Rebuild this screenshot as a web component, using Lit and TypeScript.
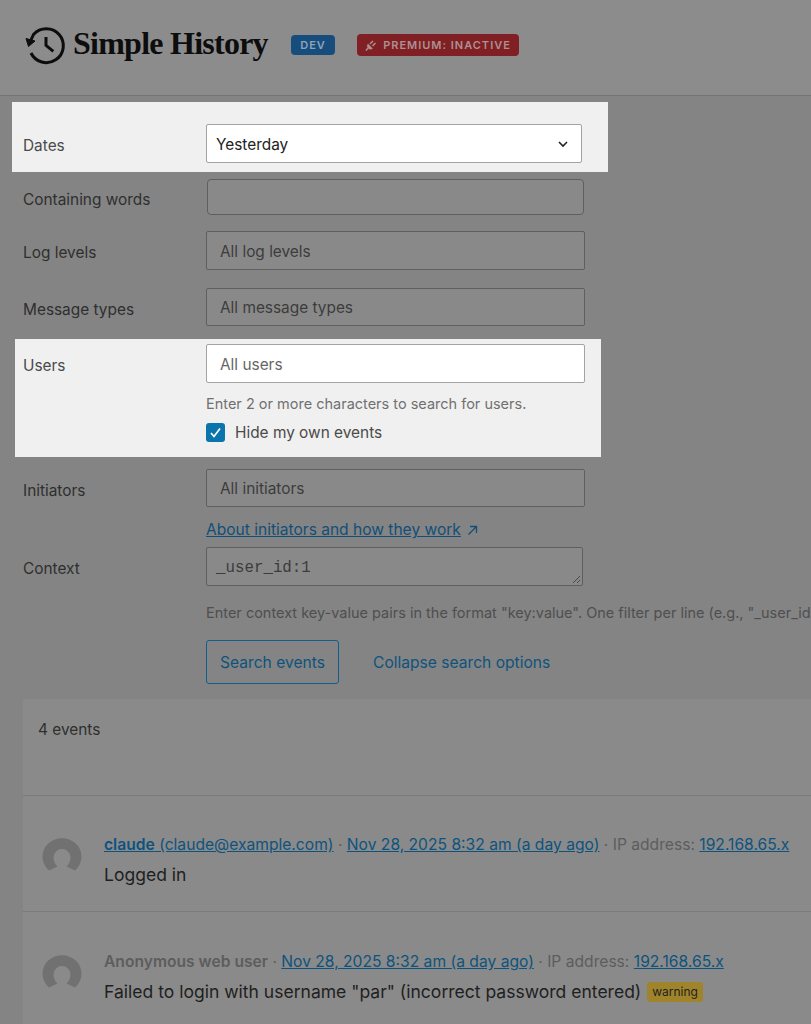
import { LitElement, html, css } from "lit";
import { customElement } from "lit/decorators.js";

// gravatar style placeholder
const avatar = html`<svg class="avatar" viewBox="0 0 40 36" aria-hidden="true">
  <path d="M7 35.5A19.5 18.5 0 1 1 33 35.5L24.5 31.5C27 29.5 28.5 26 28.5 22.5A8.5 8.5 0 0 0 11.5 22.5C11.5 26 13 29.5 15.5 31.5Z" transform="translate(0 -2)" />
</svg>`;

@customElement("app-root")
export class AppRoot extends LitElement {
  static styles = css`
    :host {
      display: block;
      width: 811px;
      height: 1024px;
      overflow: hidden;
      background: #848484;
      font-family: Inter, "Liberation Sans", sans-serif;
      font-size: 15.4px;
      color: #2f2f2f;
    }
    * { box-sizing: border-box; }

    /* header */
    .top {
      height: 96px;
      background: #8c8c8c;
      border-bottom: 1px solid #747474;
      display: flex;
      align-items: center;
      padding: 0 0 6px 24px;
    }
    .logo { width: 46px; height: 50px; flex: none; }
    .brand {
      font-family: "Liberation Serif", serif;
      font-weight: 700;
      font-size: 32px;
      letter-spacing: -0.75px;
      color: #0d0d0d;
      margin-left: 3px;
      width: 218px;
      position: relative;
      top: -1px;
    }
    .badge {
      display: flex;
      align-items: center;
      justify-content: center;
      font-size: 11px;
      font-weight: 600;
      letter-spacing: 1px;
      border-radius: 4px;
    }
    .dev { width: 44px; height: 20px; background: #174d7c; color: #8ea3b8; }
    .premium {
      width: 162px;
      height: 22px;
      margin-left: 22px;
      gap: 6px;
      background: #802024;
      color: #ad9092;
    }
    .premium svg { width: 12px; height: 12px; }

    /* filter form */
    .form { padding-left: 23px; }
    .row {
      display: grid;
      grid-template-columns: 183px 379px;
      align-items: center;
      align-content: start;
    }
    .label { padding-top: 4px; }
    .field {
      height: 38px;
      border: 1px solid #5f5f5f;
      border-radius: 2px;
      background: #898989;
      padding: 1px 0 0 13px;
      display: flex;
      align-items: center;
      color: #3c3c3c;
    }
    .spot { background: #f0f0f0; color: #4a4a4a; }
    .spot .field { background: #fff; border-color: #a3a3a3; color: #666; height: 39px; }
    .dates {
      width: 596px;
      height: 70px;
      margin: 6px 0 0 -11px;
      padding: 22px 0 0 11px;
    }
    .dates .field {
      width: 376px;
      padding: 1px 12px 0 9px;
      justify-content: space-between;
      color: #222;
    }
    .dates svg { width: 12px; height: 8px; }
    .words { margin-top: 7px; }
    .words .field { height: 36px; width: 377px; margin-left: 1px; border-radius: 4px; }
    .levels { margin-top: 16px; }
    .levels .field { height: 39px; }
    .types { margin-top: 18px; }
    .users {
      width: 586px;
      height: 118px;
      margin: 13px 0 0 -8px;
      padding: 5px 0 0 8px;
    }
    .help { font-size: 14.5px; color: #707070; line-height: 20px; margin-top: 11px; }
    .check {
      display: flex;
      align-items: center;
      gap: 10px;
      margin-top: 9px;
      color: #4a4a4a;
    }
    .box {
      width: 19px;
      height: 19px;
      border-radius: 3px;
      background: #0b74ad;
      display: flex;
      align-items: center;
      justify-content: center;
    }
    .box svg { width: 13px; height: 13px; }
    .initiators { margin-top: 12px; }
    .extra { margin-left: 183px; }
    .about {
      margin-top: 13px;
      font-size: 15.55px;
      line-height: 20px;
      color: #124f78;
      display: flex;
      align-items: center;
      gap: 6px;
    }
    .about span { text-decoration: underline; }
    .about svg { width: 11px; height: 11px; }
    .context { margin-top: 7px; }
    .context .field {
      position: relative;
      width: 377px;
      height: 39px;
      padding: 2px 0 0 9px;
      font-family: "Liberation Mono", monospace;
      font-size: 15.8px;
    }
    .grip { position: absolute; right: 1px; bottom: 1px; width: 9px; height: 9px; }
    .hint {
      margin: 17px 0 0 183px;
      font-size: 14.5px;
      line-height: 20px;
      color: #4f4f4f;
      white-space: nowrap;
    }
    .actions {
      margin: 17px 0 0 183px;
      display: flex;
      align-items: center;
      gap: 34px;
      font-size: 15.6px;
      color: #0e537d;
    }
    .btn {
      width: 133px;
      height: 44px;
      border: 1px solid #0e5f8d;
      border-radius: 3px;
      display: flex;
      align-items: center;
      justify-content: center;
    }

    /* event list */
    .panel {
      margin-top: 15px;
      background: #8a8a8a;
      height: 340px;
    }
    .count {
      height: 97px;
      padding: 21px 0 0 15px;
      line-height: 20px;
      border-bottom: 1px solid #7b7b7b;
    }
    .event {
      height: 116px;
      padding: 39px 0 0 19px;
      display: flex;
      gap: 22px;
      border-bottom: 1px solid #7b7b7b;
    }
    .event + .event { padding-top: 40px; }
    .avatar { width: 40px; height: 36px; flex: none; margin-top: 2px; fill: #717171; }
    .meta { font-size: 15.64px; line-height: 20px; color: #5d5d5d; white-space: nowrap; }
    .meta a { color: #0e537d; text-decoration: underline; }
    .meta b { font-weight: 600; }
    .msg { font-size: 17.55px; line-height: 24px; margin-top: 8px; color: #1f1f1f; display: flex; align-items: center; gap: 6px; white-space: nowrap; }
    .warn {
      font-size: 12px;
      line-height: 20px;
      padding: 0 5px;
      background: #a0842c;
      border-radius: 3px;
      color: #1f1f1f;
    }
  `;

  render() {
    return html`
      <header class="top">
        <svg class="logo" viewBox="0 0 46 50" fill="none" stroke="#0d0d0d" stroke-width="3" aria-hidden="true">
          <path d="M7 33A17 17 0 1 0 9.500 14.500L7 20" />
          <path d="M2 18.500L11 21L4.500 26.500Z" fill="#0d0d0d" stroke-width="1" />
          <path d="M22 17V25.300L29.300 31.300" />
        </svg>
        <span class="brand">Simple History</span>
        <span class="badge dev">DEV</span>
        <span class="badge premium">
          <svg viewBox="0 0 12 12" fill="#ad9092" stroke="#ad9092">
            <path d="M3 5L7.500 9.500C6 10.500 4.500 10.500 3.200 9.300C2 8 2 6.500 3 5Z" stroke-width="0.500" />
            <path d="M0.800 11.500L3 9.300M5 5L8 2M7.500 7L10.500 4" fill="none" stroke-width="1.500" />
          </svg>
          PREMIUM: INACTIVE
        </span>
      </header>

      <section class="form">
        <div class="row spot dates">
          <span class="label">Dates</span>
          <div class="field">
            Yesterday
            <svg viewBox="0 0 12 8" fill="none" stroke="#222" stroke-width="1.600"><path d="M2 2L6 6L10 2" /></svg>
          </div>
        </div>
        <div class="row words"><span class="label">Containing words</span><div class="field"></div></div>
        <div class="row levels"><span class="label">Log levels</span><div class="field">All log levels</div></div>
        <div class="row types"><span class="label">Message types</span><div class="field">All message types</div></div>

        <div class="spot users">
          <div class="row"><span class="label">Users</span><div class="field">All users</div></div>
          <div class="extra">
            <div class="help">Enter 2 or more characters to search for users.</div>
            <div class="check">
              <span class="box">
                <svg viewBox="0 0 13 13" fill="none" stroke="#fff" stroke-width="1.700"><path d="M2 7L5 10.500L11 2.500" /></svg>
              </span>
              Hide my own events
            </div>
          </div>
        </div>

        <div class="row initiators"><span class="label">Initiators</span><div class="field">All initiators</div></div>
        <div class="extra about">
          <span>About initiators and how they work</span>
          <svg viewBox="0 0 11 11" fill="none" stroke="#124f78" stroke-width="1.300"><path d="M1.500 9.500L9.500 1.500M3 1.500H9.500V8" /></svg>
        </div>
        <div class="row context">
          <span class="label">Context</span>
          <div class="field">
            _user_id:1
            <svg class="grip" viewBox="0 0 9 9" stroke="#4a4a4a"><path d="M1 8L8 1M5 8L8 5" /></svg>
          </div>
        </div>
        <div class="hint">Enter context key-value pairs in the format "key:value". One filter per line (e.g., "_user_id:1").</div>
        <div class="actions">
          <span class="btn">Search events</span>
          <span>Collapse search options</span>
        </div>

        <div class="panel">
          <div class="count">4 events</div>
          <div class="event">
            ${avatar}
            <div>
              <div class="meta"><a><b>claude</b> (claude@example.com)</a> · <a>Nov 28, 2025 8:32 am (a day ago)</a> · IP address: <a>192.168.65.x</a></div>
              <div class="msg">Logged in</div>
            </div>
          </div>
          <div class="event">
            ${avatar}
            <div>
              <div class="meta"><b>Anonymous web user</b> · <a>Nov 28, 2025 8:32 am (a day ago)</a> · IP address: <a>192.168.65.x</a></div>
              <div class="msg">Failed to login with username "par" (incorrect password entered) <span class="warn">warning</span></div>
            </div>
          </div>
        </div>
      </section>
    `;
  }
}
